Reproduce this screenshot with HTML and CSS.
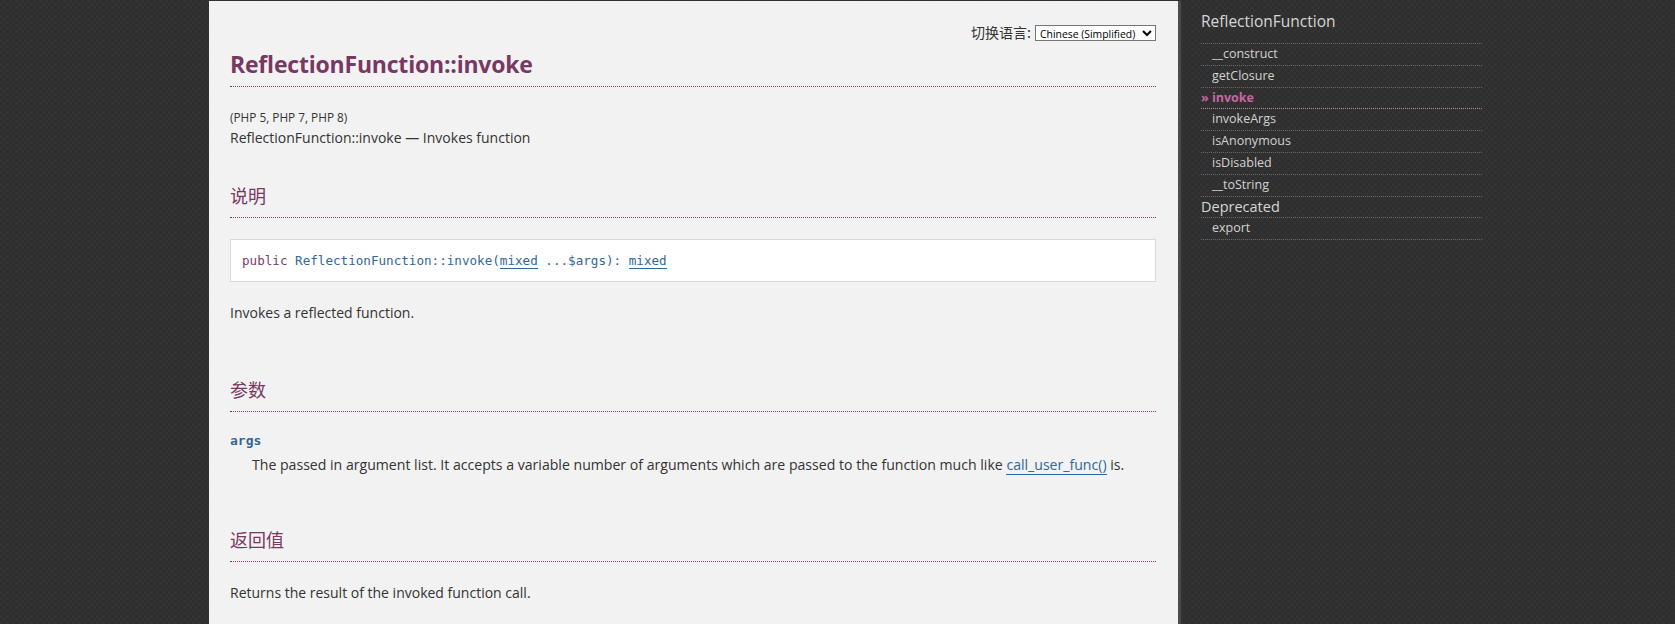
FILE: index.html
```html
<!DOCTYPE html>
<html lang="zh-CN">
<head>
<meta charset="utf-8">
<title>PHP: ReflectionFunction::invoke - Manual</title>
<link rel="stylesheet" href="styles.css">
</head>
<body>
<div class="layout">
  <main class="content">
    <div class="change-language">
      <label for="lang">切换语言:</label>
      <select id="lang" class="lang-select"><option>Chinese (Simplified)</option></select>
    </div>
    <h1 class="refname">ReflectionFunction::invoke</h1>
    <div class="refnamediv">
      <p class="verinfo">(PHP 5, PHP 7, PHP 8)</p>
      <p class="refpurpose">ReflectionFunction::invoke — Invokes function</p>
    </div>

    <section class="refsect sect-desc">
      <h3 class="title">说明</h3>
      <div class="methodsynopsis"><span class="modifier">public</span> <span class="methodname">ReflectionFunction::invoke</span>(<a class="type" href="#">mixed</a> <span class="param">...$args</span>): <a class="type" href="#">mixed</a></div>
      <p class="para">Invokes a reflected function.</p>
    </section>

    <section class="refsect sect-params">
      <h3 class="title">参数</h3>
      <dl class="params">
        <dt><code class="parameter">args</code></dt>
        <dd>The passed in argument list. It accepts a variable number of arguments which are passed to the function much like <a class="link" href="#">call_user_func()</a> is.</dd>
      </dl>
    </section>

    <section class="refsect sect-return">
      <h3 class="title">返回值</h3>
      <p class="para">Returns the result of the invoked function call.</p>
    </section>
  </main>

  <aside class="sidebar">
    <ul class="toc">
      <li class="toc-head toc-title">ReflectionFunction</li>
      <li><a href="#">__construct</a></li>
      <li><a href="#">getClosure</a></li>
      <li class="current"><a href="#">» invoke</a></li>
      <li><a href="#">invokeArgs</a></li>
      <li><a href="#">isAnonymous</a></li>
      <li><a href="#">isDisabled</a></li>
      <li><a href="#">__toString</a></li>
      <li class="toc-head">Deprecated</li>
      <li><a href="#">export</a></li>
    </ul>
  </aside>
</div>
</body>
</html>
```

FILE: styles.css
```css
html, body {
  margin: 0;
  padding: 0;
}
body {
  background-color: #2e2e2e;
  background-image:
    linear-gradient(45deg, rgba(255,255,255,0.025) 25%, transparent 25%, transparent 75%, rgba(255,255,255,0.025) 75%),
    linear-gradient(45deg, rgba(255,255,255,0.025) 25%, transparent 25%, transparent 75%, rgba(255,255,255,0.025) 75%);
  background-size: 6px 6px;
  background-position: 0 0, 3px 3px;
  font-family: "Open Sans", "Noto Sans CJK SC", sans-serif;
  color: #333;
  height: 624px;
  overflow: hidden;
}
.layout {
  display: flex;
  align-items: stretch;
  padding-top: 1px;
  min-height: 623px;
}
.content {
  margin-left: 209px;
  width: 926px;
  padding: 0 22px 0 21px;
  background: #f2f2f2;
  border-right: 3px solid #4b4b4b;
}
.change-language {
  display: flex;
  justify-content: flex-end;
  align-items: center;
  gap: 4px;
  margin-top: 22px;
  height: 19px;
  font-size: 14px;
  color: #333;
}
.change-language label {
  font-family: "Noto Sans CJK SC", sans-serif;
  line-height: 19px;
}
.lang-select {
  font-family: "Open Sans", sans-serif;
  font-size: 10.4px;
  height: 16px;
  width: 121px;
  padding: 0;
  border: 1px solid #767676;
  border-radius: 0;
  background: #fff;
  color: #000;
}
.refname {
  margin: 5px 0 0;
  padding-bottom: 5px;
  font-size: 23px;
  font-weight: 700;
  color: #793862;
  line-height: 34px;
  border-bottom: 1px dotted #793862;
  letter-spacing: -0.2px;
}
.refnamediv p {
  margin: 0;
}
.refnamediv .verinfo {
  margin-top: 21px;
  font-size: 11.8px;
  line-height: 18px;
}
.refpurpose {
  font-size: 14px;
  line-height: 24px;
}
.refsect .title {
  margin: 31px 0 0;
  font-family: "Noto Sans CJK SC", sans-serif;
  font-weight: 400;
  font-size: 18px;
  line-height: 28px;
  color: #793862;
  padding-bottom: 8px;
  border-bottom: 1px dotted #793862;
}
.methodsynopsis {
  margin-top: 21px;
  background: #fff;
  border: 1px solid #d9d9d9;
  padding: 11px 11px;
  font-family: "DejaVu Sans Mono", monospace;
  font-size: 12.6px;
  line-height: 19px;
  color: #369;
}
.modifier {
  color: #7b3a67;
}
.methodname,
.param {
  color: #369;
}
.type,
.link {
  color: #369;
  text-decoration: none;
  border-bottom: 1px solid #369;
}
.para {
  margin: 21px 0 0;
  font-size: 14px;
  line-height: 20px;
}
.sect-params .title {
  margin-top: 52px;
}
.params {
  margin: 19px 0 0;
}
.params dt {
  font-family: "DejaVu Sans Mono", monospace;
  font-weight: 700;
  font-size: 13px;
  line-height: 20px;
  color: #369;
}
.params dd {
  margin: 4px 0 0 22px;
  font-size: 14.1px;
  line-height: 20px;
}
.sect-return .title {
  margin-top: 50px;
}
.sidebar {
  width: 281px;
  padding: 0 20px;
}
.toc {
  list-style: none;
  margin: 0;
  padding: 0;
}
.toc li {
  height: 20.8px;
  line-height: 20px;
  border-bottom: 1px dotted #6a6a6a;
  font-size: 12.5px;
}
.toc li a {
  color: #d2d2d2;
  text-decoration: none;
  padding-left: 11px;
}
.toc li.toc-head {
  font-size: 14.5px;
  color: #d6d6d6;
}
.toc li.toc-title {
  height: 42px;
  line-height: 40px;
  font-size: 15.5px;
}
.toc li.current {
  border-bottom-color: #b98aa8;
}
.toc li.current a {
  padding-left: 0;
  color: #c766a6;
  font-weight: 700;
}
```
